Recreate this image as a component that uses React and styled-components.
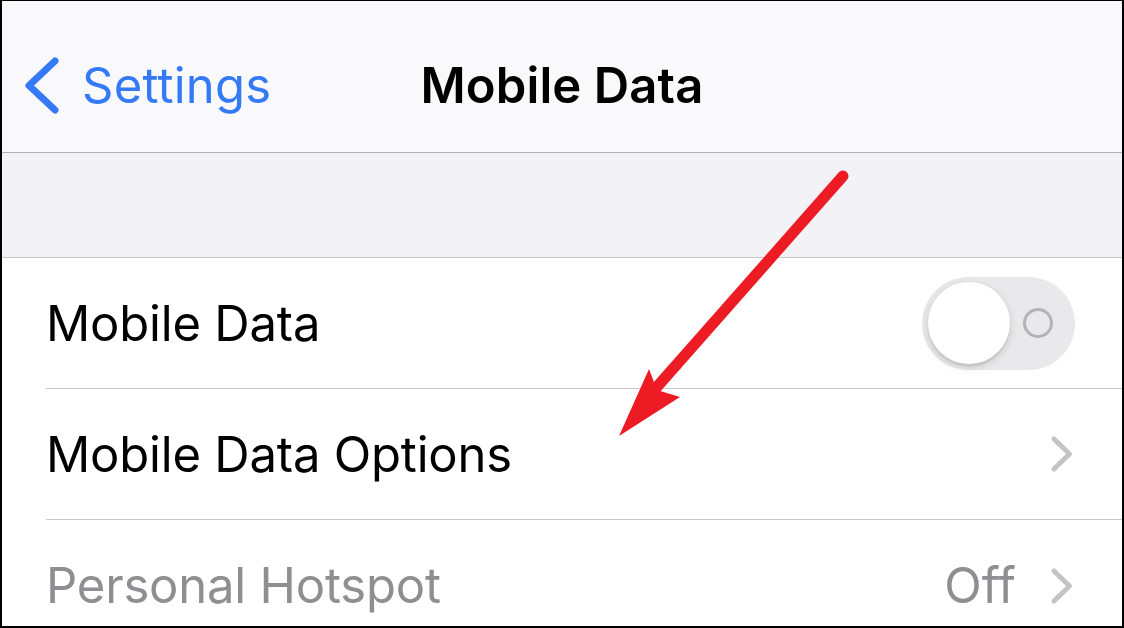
import React from 'react';
import styled, { createGlobalStyle } from 'styled-components';

const GlobalStyle = createGlobalStyle`
  html, body {
    margin: 0;
    padding: 0;
    background: #000;
  }
  * {
    box-sizing: border-box;
  }
`;

const Frame = styled.div`
  position: relative;
  width: 1124px;
  height: 628px;
  overflow: hidden;
  background: #fff;
  border: 2px solid #000;
  border-top-width: 1px;
  font-family: Inter, "Liberation Sans", sans-serif;
  -webkit-font-smoothing: antialiased;
`;

const NavBar = styled.header`
  display: grid;
  grid-template-columns: 1fr auto 1fr;
  align-items: center;
  height: 152px;
  padding-top: 18px;
  background: #f9f9fb;
  border-bottom: 1px solid #b2b2b4;
`;

const BackButton = styled.div`
  display: flex;
  align-items: center;
  gap: 22px;
  padding-left: 22px;
  color: #3479f6;
  font-size: 49px;
  letter-spacing: 0.2px;
`;

const Title = styled.h1`
  margin: 0;
  font-size: 49px;
  font-weight: 600;
  color: #000;
  letter-spacing: 0.1px;
`;

const GroupGap = styled.div`
  height: 105px;
  background: #f2f2f7;
  border-bottom: 1px solid #c6c6c8;
`;

const Row = styled.div`
  padding-left: 44px;
  background: #fff;
`;

const RowInner = styled.div`
  display: flex;
  align-items: center;
  justify-content: space-between;
  height: 131px;
  padding-right: ${(p) => p.$pad}px;
  border-bottom: ${(p) => (p.$last ? 'none' : '1px solid #c8c8ca')};
`;

const Label = styled.span`
  font-size: 49px;
  color: ${(p) => (p.$dim ? '#8e8e93' : '#000')};
  letter-spacing: -0.2px;
`;

const Detail = styled.div`
  display: flex;
  align-items: center;
  gap: 34px;
  font-size: 49px;
  color: #8e8e93;
`;

const Track = styled.div`
  position: relative;
  width: 153px;
  height: 93px;
  border-radius: 47px;
  background: #e9e9eb;
`;

const Knob = styled.div`
  position: absolute;
  left: 6px;
  top: 5.5px;
  width: 82px;
  height: 82px;
  border-radius: 50%;
  background: #fff;
  box-shadow: 0 3px 8px rgba(0, 0, 0, 0.15), 0 3px 1px rgba(0, 0, 0, 0.06);
`;

const OffRing = styled.div`
  position: absolute;
  left: 101px;
  top: 31.5px;
  width: 30px;
  height: 30px;
  border-radius: 50%;
  border: 3px solid #b3b3b5;
`;

const Overlay = styled.svg`
  position: absolute;
  left: -2px;
  top: -1px;
  width: 1124px;
  height: 628px;
  pointer-events: none;
`;

const Chevron = () => (
  <svg width="24" height="38" viewBox="0 0 24 38">
    <polyline
      points="4,4 19.5,19 4,34"
      fill="none"
      stroke="#c4c4c7"
      strokeWidth="5"
      strokeLinecap="round"
      strokeLinejoin="round"
    />
  </svg>
);

const BackChevron = () => (
  <svg width="36" height="58" viewBox="0 0 36 58">
    <polyline
      points="31,4 5,28.5 31,53"
      fill="none"
      stroke="#3479f6"
      strokeWidth="7"
      strokeLinecap="round"
      strokeLinejoin="round"
    />
  </svg>
);

export default function App() {
  return (
    <>
      <GlobalStyle />
      <Frame>
        <NavBar>
          <BackButton>
            <BackChevron />
            <span>Settings</span>
          </BackButton>
          <Title>Mobile Data</Title>
          <div />
        </NavBar>
        <GroupGap />
        <Row>
          <RowInner $pad={47}>
            <Label>Mobile Data</Label>
            <Track>
              <Knob />
              <OffRing />
            </Track>
          </RowInner>
        </Row>
        <Row>
          <RowInner $pad={48}>
            <Label>Mobile Data Options</Label>
            <Chevron />
          </RowInner>
        </Row>
        <Row>
          <RowInner $pad={48} $last>
            <Label $dim>Personal Hotspot</Label>
            <Detail>
              <span>Off</span>
              <Chevron />
            </Detail>
          </RowInner>
        </Row>
        <Overlay viewBox="0 0 1124 628">
          <line
            x1="843"
            y1="176"
            x2="656"
            y2="388"
            stroke="#ed1c24"
            strokeWidth="11"
            strokeLinecap="round"
          />
          <polygon points="619,436 649,369 657,390 680,397" fill="#ed1c24" />
        </Overlay>
      </Frame>
    </>
  );
}
